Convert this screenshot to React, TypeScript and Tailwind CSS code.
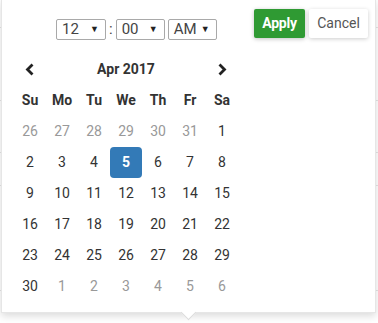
import React from "react"

const days = ["Su", "Mo", "Tu", "We", "Th", "Fr", "Sa"]

const weeks: { d: number; muted?: boolean }[][] = [
  [{ d: 26, muted: true }, { d: 27, muted: true }, { d: 28, muted: true }, { d: 29, muted: true }, { d: 30, muted: true }, { d: 31, muted: true }, { d: 1 }],
  [{ d: 2 }, { d: 3 }, { d: 4 }, { d: 5 }, { d: 6 }, { d: 7 }, { d: 8 }],
  [{ d: 9 }, { d: 10 }, { d: 11 }, { d: 12 }, { d: 13 }, { d: 14 }, { d: 15 }],
  [{ d: 16 }, { d: 17 }, { d: 18 }, { d: 19 }, { d: 20 }, { d: 21 }, { d: 22 }],
  [{ d: 23 }, { d: 24 }, { d: 25 }, { d: 26 }, { d: 27 }, { d: 28 }, { d: 29 }],
  [{ d: 30 }, { d: 1, muted: true }, { d: 2, muted: true }, { d: 3, muted: true }, { d: 4, muted: true }, { d: 5, muted: true }, { d: 6, muted: true }],
]

function TimeSelect({ value, w }: { value: string; w: string }) {
  return (
    <div className={`${w} h-[21px] border border-[#a9a9a9] rounded-[2px] flex items-center justify-between pl-[5px] pr-[6px] text-[15px] text-[#444]`}>
      <span>{value}</span>
      <span className="text-[9px] text-[#222]">▼</span>
    </div>
  )
}

function Chevron({ dir }: { dir: "left" | "right" }) {
  return (
    <svg width="10" height="13" viewBox="0 0 10 13">
      <polyline
        points={dir === "left" ? "7.5,1.5 2.5,6.5 7.5,11.5" : "2.5,1.5 7.5,6.5 2.5,11.5"}
        fill="none"
        stroke="#222"
        strokeWidth="2.8"
      />
    </svg>
  )
}

export default function App() {
  return (
    <div className="relative w-[378px] h-[323px] bg-white overflow-hidden font-['Roboto',sans-serif]">
      <div className="absolute inset-x-0 top-[27px] h-px bg-[#e5e5e5]" />
      <div className="absolute inset-x-0 top-[100px] h-px bg-[#e5e5e5]" />
      <div className="absolute inset-x-0 top-[152px] h-px bg-[#e5e5e5]" />
      <div className="absolute inset-x-0 top-[185px] h-px bg-[#e5e5e5]" />
      <div className="absolute inset-x-0 top-[290px] h-px bg-[#e5e5e5]" />

      <div className="absolute left-[1px] top-[-1px] w-[375px] h-[314px] bg-white border border-[#e6e6e6] shadow-[0_3px_8px_rgba(0,0,0,0.15)]">
        <div className="absolute left-1/2 -ml-[6px] bottom-[-6px] w-[11px] h-[11px] rotate-45 bg-white border-r border-b border-[#dcdcdc]" />

        <div className="relative flex items-start">
          <div className="ml-[54px] mt-[18px] flex items-center text-[#444]">
            <TimeSelect value="12" w="w-[50px]" />
            <span className="mx-[3px] text-[15px]">:</span>
            <TimeSelect value="00" w="w-[49px]" />
            <div className="w-[3px]" />
            <TimeSelect value="AM" w="w-[49px]" />
          </div>
          <div className="ml-auto mr-[7px] mt-[9px] flex gap-[4px]">
            <button className="w-[51px] h-[29px] bg-[#2f9a33] text-white font-bold text-[14px] tracking-[-0.2px] rounded-[2px] shadow-[0_1px_4px_rgba(0,0,0,0.25)]">
              Apply
            </button>
            <button className="w-[59px] h-[29px] bg-white text-[#555] text-[14px] rounded-[2px] shadow-[0_1px_4px_rgba(0,0,0,0.2)]">
              Cancel
            </button>
          </div>
        </div>

        <div className="ml-[12px] mt-[13px] w-[224px] grid grid-cols-7 auto-rows-[31px] text-[14px] text-[#333]">
          <div className="flex items-center justify-center">
            <Chevron dir="left" />
          </div>
          <div className="col-span-5 flex items-center justify-center font-bold">Apr 2017</div>
          <div className="flex items-center justify-center">
            <Chevron dir="right" />
          </div>

          {days.map((d) => (
            <div key={d} className="flex items-center justify-center font-bold">
              {d}
            </div>
          ))}

          {weeks.flat().map((c, i) => {
            const selected = i === 10
            return (
              <div
                key={i}
                className={
                  selected
                    ? "flex items-center justify-center rounded-[4px] bg-[#337ab7] text-white font-bold"
                    : c.muted
                    ? "flex items-center justify-center text-[#999]"
                    : "flex items-center justify-center"
                }
              >
                {c.d}
              </div>
            )
          })}
        </div>
      </div>
    </div>
  )
}
